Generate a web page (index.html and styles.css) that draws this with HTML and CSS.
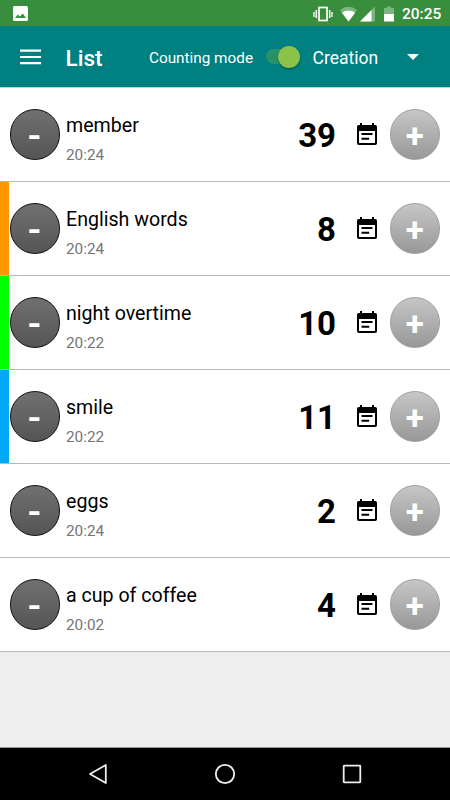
FILE: index.html
```html
<!DOCTYPE html>
<html lang="en">
<head>
<meta charset="utf-8">
<title>List</title>
<link rel="stylesheet" href="styles.css">
</head>
<body>
<svg class="defs" width="0" height="0">
  <symbol id="note" viewBox="0 0 20 23">
    <path fill-rule="evenodd" d="M3 0h2v2h10V0h2v2h1.200A1.800 1.800 0 0 1 20 3.800V20.200A1.800 1.800 0 0 1 18.200 22H1.800A1.800 1.800 0 0 1 0 20.200V3.800A1.800 1.800 0 0 1 1.800 2H3zM2 8v12h16V8zM4.500 10h11v2h-11zM4.500 14.700h7.700v2H4.500z"/>
  </symbol>
</svg>
<div class="status">
  <svg class="photo" width="15" height="15" viewBox="0 0 15 15"><rect width="15" height="15" rx="1.500" fill="#fff"/><path d="M2 12l2.800-3.600 2 2.200L9.800 7.500 13 12z" fill="#388e3c"/></svg>
  <svg class="signals" width="84" height="18" viewBox="0 0 84 18">
    <g fill="none" stroke="#fff"><rect x="6" y="2.500" width="8" height="13" stroke-width="1.700"/><path d="M3.300 5v8M16.700 5v8" stroke-width="1.500"/><path d="M1 7v5M19 7v5" stroke-width="1.300"/></g>
    <path d="M27 5Q35.500-1.500 44 5L35.500 16.500z" fill="#fff" opacity=".35"/><path d="M28.800 7.800Q35.500 3 42.200 7.800L35.500 16.500z" fill="#fff"/>
    <path d="M47 16.500L62 1.500v15z" fill="#fff" opacity=".35"/><path d="M47 16.500L58.500 5v11.500z" fill="#fff"/>
    <path d="M71 3h3V1.500h4V3h3v6H71z" fill="#fff" opacity=".35"/><path d="M71 9h10v7.500H71z" fill="#fff"/>
  </svg>
  <span class="clock">20:25</span>
</div>
<header class="bar">
  <svg class="menu" width="21" height="16" viewBox="0 0 21 16"><path d="M0 1.700h21M0 8h21M0 14.200h21" stroke="#fff" stroke-width="2.200"/></svg>
  <h1 class="title">List</h1>
  <span class="mode">Counting mode</span>
  <span class="switch"><span class="thumb"></span></span>
  <span class="sort">Creation</span>
  <svg class="caret" width="12" height="6" viewBox="0 0 12 6"><path d="M0 0h12L6 6z" fill="#fff"/></svg>
</header>
<main class="list">
  <div class="row">
    <span class="tag"></span><span class="btn minus"><b>-</b></span>
    <div class="info"><div class="name">member</div><div class="time">20:24</div></div>
    <span class="count">39</span><svg class="note"><use href="#note"/></svg><span class="btn plus"><b>+</b></span>
  </div>
  <div class="row">
    <span class="tag orange"></span><span class="btn minus"><b>-</b></span>
    <div class="info"><div class="name">English words</div><div class="time">20:24</div></div>
    <span class="count">8</span><svg class="note"><use href="#note"/></svg><span class="btn plus"><b>+</b></span>
  </div>
  <div class="row">
    <span class="tag green"></span><span class="btn minus"><b>-</b></span>
    <div class="info"><div class="name">night overtime</div><div class="time">20:22</div></div>
    <span class="count">10</span><svg class="note"><use href="#note"/></svg><span class="btn plus"><b>+</b></span>
  </div>
  <div class="row">
    <span class="tag blue"></span><span class="btn minus"><b>-</b></span>
    <div class="info"><div class="name">smile</div><div class="time">20:22</div></div>
    <span class="count">11</span><svg class="note"><use href="#note"/></svg><span class="btn plus"><b>+</b></span>
  </div>
  <div class="row">
    <span class="tag"></span><span class="btn minus"><b>-</b></span>
    <div class="info"><div class="name">eggs</div><div class="time">20:24</div></div>
    <span class="count">2</span><svg class="note"><use href="#note"/></svg><span class="btn plus"><b>+</b></span>
  </div>
  <div class="row">
    <span class="tag"></span><span class="btn minus"><b>-</b></span>
    <div class="info"><div class="name">a cup of coffee</div><div class="time">20:02</div></div>
    <span class="count">4</span><svg class="note"><use href="#note"/></svg><span class="btn plus"><b>+</b></span>
  </div>
</main>
<nav class="nav">
  <svg width="22" height="22" viewBox="0 0 22 22"><path d="M3 11L18.800 2v18z"/></svg>
  <svg width="22" height="22" viewBox="0 0 22 22"><circle cx="11" cy="11" r="9.200"/></svg>
  <svg width="22" height="22" viewBox="0 0 22 22"><rect x="2.700" y="2.700" width="16.600" height="16.600" rx=".5"/></svg>
</nav>
</body>
</html>
```

FILE: styles.css
```css
* { box-sizing: border-box; }
body {
  margin: 0;
  width: 450px;
  height: 800px;
  display: flex;
  flex-direction: column;
  overflow: hidden;
  background: #eee;
  font-family: Roboto, "Liberation Sans", sans-serif;
}
svg { display: block; flex: none; }
.defs { position: absolute; }
.status {
  height: 26px;
  flex: none;
  display: flex;
  align-items: center;
  padding: 0 9px 0 12.500px;
  background: #388e3c;
  color: #fff;
}
.signals { margin-left: auto; margin-top: 1px; }
.clock { width: 39px; margin-left: 5px; margin-top: 2px; font-size: 15.500px; font-weight: 500; line-height: 20px; white-space: nowrap; }
.bar {
  height: 61px;
  flex: none;
  display: grid;
  grid-template-columns: 45.500px 83.500px 117px 46.500px 94.500px 12px;
  align-items: center;
  padding-left: 20px;
  background: #008080;
  color: #fff;
}
.title { margin: 2px 0 0; font-size: 22.500px; font-weight: 500; line-height: 28px; }
.mode { margin-top: 2px; font-size: 15.300px; white-space: nowrap; }
.sort { margin-top: 2px; font-size: 17.500px; }
.caret { margin-top: 1px; }
.switch { width: 33px; height: 15px; border-radius: 8px; background: #299269; }
.thumb {
  display: block;
  width: 22px;
  height: 22px;
  margin: -3.500px 0 0 12px;
  border-radius: 50%;
  background: #8bc34a;
  box-shadow: 0 1px 2px rgba(0, 0, 0, .4);
}
.list { flex: 1; border-top: 1px solid #c5cfcf; }
.row {
  height: 94px;
  display: grid;
  grid-template-columns: 9.500px 50.500px 6px 1fr 80.500px 20.500px 20px 13px 50.500px 10px;
  align-items: center;
  border-bottom: 1px solid #b8b8b8;
  background: #fff;
}
.tag { width: 9px; height: 100%; }
.orange { background: #ff9800; }
.green { background: #0f0; }
.blue { background: #03a9f4; }
.btn {
  width: 50.500px;
  height: 50.500px;
  border-radius: 50%;
  display: flex;
  align-items: center;
  justify-content: center;
  color: #fff;
  font-size: 33px;
  line-height: 50px;
}
.btn b { margin-top: 2px; }
.minus b { transform: scaleX(1.100); }
.minus { border: 1px solid #111; background: linear-gradient(#707070, #555); }
.plus { grid-column: 9; border: 1px solid #a0a0a0; background: linear-gradient(#c6c6c6, #989898); }
.info { grid-column: 4; padding-top: 10px; }
.name { font-size: 19.600px; line-height: 24px; color: #000; white-space: nowrap; }
.time { margin-top: 7px; font-size: 15.300px; line-height: 20px; color: #757575; }
.count { grid-column: 5; margin-top: 3px; text-align: right; font-size: 33px; line-height: 40px; font-weight: 700; }
.note { grid-column: 7; width: 20px; height: 23px; }
.nav {
  height: 53px;
  flex: none;
  display: flex;
  justify-content: space-between;
  align-items: center;
  padding: 0 87px;
  border-top: 1px solid #999;
  background: #000;
}
.nav svg { fill: none; stroke: #eee; stroke-width: 1.800; stroke-linejoin: round; }
```
